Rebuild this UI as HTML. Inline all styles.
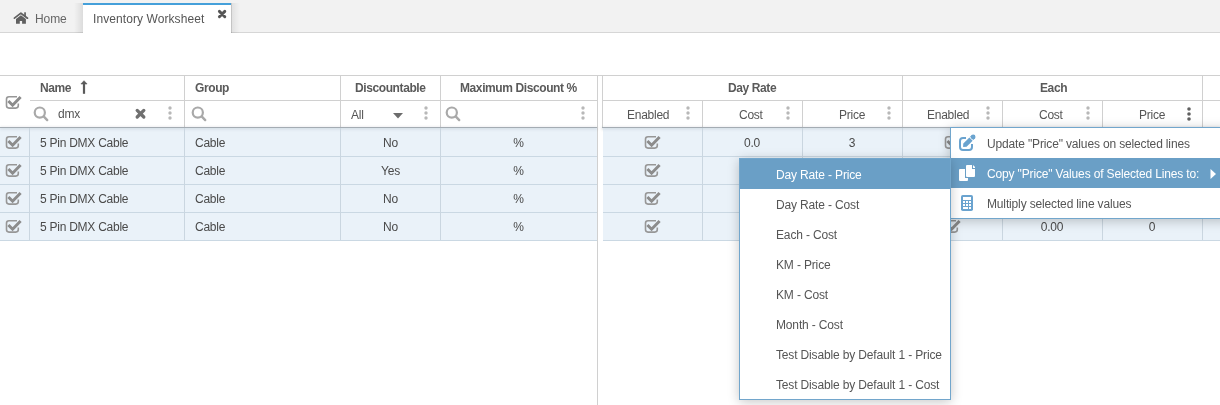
<!DOCTYPE html>
<html><head><meta charset="utf-8"><style>
*{box-sizing:border-box}
html,body{margin:0;padding:0}
body{width:1220px;height:405px;overflow:hidden;background:#fff;position:relative;font-family:"Liberation Sans",sans-serif;color:#4a4a4a;font-size:12px}
.a{position:absolute}
.t{position:absolute;white-space:nowrap;line-height:12px;letter-spacing:-0.25px}
.hl{position:absolute;height:1px;background:#d0d0d0}
.vl{position:absolute;width:1px;background:#d0d0d0}
.b{font-weight:bold;color:#5a5a5a;letter-spacing:-0.4px}
.h{color:#555}
.dots{position:absolute;width:4px;height:14px}
.dots i{position:absolute;left:0.3px;width:3.4px;height:3.4px;border-radius:50%;background:#b8b8b8}
.dots i:nth-child(1){top:0}.dots i:nth-child(2){top:4.7px}.dots i:nth-child(3){top:9.4px}
.dk i{background:#555}
.row{position:absolute;height:28px;background:#eaf2f9}
.rl{position:absolute;height:1px;background:#cad8e3}
.rv{position:absolute;width:1px;background:#cad6e0}
.menu{position:absolute;background:#fff;border:1px solid #72a6cc;box-shadow:0 2px 11px rgba(0,0,0,.22)}
.mi{position:absolute;left:0;right:0;height:30px}
.sel{background:#6a9fc6;color:#fff}
.mt{position:absolute;white-space:nowrap;line-height:12px;letter-spacing:-0.15px;color:#555}
.sel .mt{color:#fff}
</style></head><body>
<div id="root" style="position:absolute;left:0;top:0;width:1220px;height:405px;will-change:transform">
<div class="a" style="left:0;top:0;width:1220px;height:32px;background:#f2f2f2"></div>
<div class="a" style="left:0;top:32px;width:1220px;height:1px;background:#d6d6d6"></div>
<div class="a" style="left:74px;top:3px;width:9px;height:30px;background:linear-gradient(to right,rgba(0,0,0,0),rgba(0,0,0,.09))"></div>
<div class="a" style="left:231px;top:3px;width:9px;height:30px;background:linear-gradient(to left,rgba(0,0,0,0),rgba(0,0,0,.08))"></div>
<div class="a" style="left:231px;top:3px;width:1px;height:30px;background:rgba(0,0,0,.12)"></div>
<div class="a" style="left:83px;top:3px;width:148px;height:30px;background:#fff"></div>
<div class="a" style="left:83px;top:3px;width:148px;height:2px;background:#45a0da"></div>
<svg class="a" style="left:10px;top:8px" width="24" height="22" viewBox="0 0 24 22"><path d="M4.4 10.2 L10.9 5.2 L17.5 10.2" fill="none" stroke="#606060" stroke-width="1.7" stroke-linecap="round" stroke-linejoin="round"/><path d="M6 10.9 L10.9 7.2 L15.9 10.9 V15.8 H12.1 V13 H9.8 V15.8 H6 Z" fill="#606060"/><rect x="14.2" y="4.3" width="1.7" height="4" fill="#606060"/></svg>
<div class="t" style="left:35px;top:13px;color:#666;letter-spacing:-0.1px">Home</div>
<div class="t" style="left:93px;top:13px;color:#555;letter-spacing:0.08px">Inventory Worksheet</div>
<svg class="a" style="left:217px;top:9px" width="11" height="11" viewBox="0 0 11 11"><path d="M2.4 2.4 L7.8 7.8 M7.8 2.4 L2.4 7.8" stroke="#555" stroke-width="2.9" stroke-linecap="round"/></svg>
<div class="hl" style="left:0;top:75px;width:1220px"></div>
<div class="hl" style="left:30px;top:100px;width:567px"></div>
<div class="hl" style="left:602px;top:100px;width:618px"></div>
<div class="vl" style="left:184px;top:76px;height:51px"></div>
<div class="vl" style="left:340px;top:76px;height:51px"></div>
<div class="vl" style="left:440px;top:76px;height:51px"></div>
<div class="vl" style="left:597px;top:76px;height:329px"></div>
<div class="vl" style="left:602px;top:76px;height:52px"></div>
<div class="vl" style="left:702px;top:101px;height:26px"></div>
<div class="vl" style="left:802px;top:101px;height:26px"></div>
<div class="vl" style="left:902px;top:76px;height:51px"></div>
<div class="vl" style="left:1002px;top:101px;height:26px"></div>
<div class="vl" style="left:1102px;top:101px;height:26px"></div>
<div class="vl" style="left:1202px;top:76px;height:51px"></div>
<svg class="a" style="left:5px;top:95px" width="18" height="16" viewBox="0 0 18 16"><path d="M12 1.7 H4 Q1.5 1.7 1.5 4.2 V10.6 Q1.5 13.1 4 13.1 H10.8 Q13.3 13.1 13.3 10.6 V8.6" fill="none" stroke="#979797" stroke-width="1.6"/><path d="M3.4 6.0 L7.6 10.2 L15.6 2.0" fill="none" stroke="#8c8c8c" stroke-width="3"/></svg>
<div class="t b" style="left:40px;top:82px">Name</div>
<svg class="a" style="left:80px;top:80px" width="8" height="15" viewBox="0 0 8 15"><path d="M0.9 4 L4 0.7 L7.1 4 Z" fill="#5a5a5a" stroke="#5a5a5a" stroke-width="0.6" stroke-linejoin="round"/><rect x="2.9" y="3.5" width="2.2" height="10.3" fill="#5a5a5a"/></svg>
<div class="t b" style="left:195px;top:82px">Group</div>
<div class="t b" style="left:355px;top:82px">Discountable</div>
<div class="t b" style="left:460px;top:82px">Maximum Discount %</div>
<div class="t b" style="left:728px;top:82px">Day Rate</div>
<div class="t b" style="left:1040px;top:82px">Each</div>
<svg class="a" style="left:33px;top:106px" width="16" height="16" viewBox="0 0 16 16"><circle cx="6.8" cy="6.6" r="5.1" fill="none" stroke="#a9a9a9" stroke-width="2.2"/><path d="M10.9 10.7 L14.2 14.1" stroke="#a9a9a9" stroke-width="2.4" stroke-linecap="round"/></svg>
<div class="t h" style="left:58px;top:108px">dmx</div>
<svg class="a" style="left:134px;top:107px" width="13" height="13" viewBox="0 0 13 13"><path d="M3.2 3.4 L9.8 10 M9.8 3.4 L3.2 10" stroke="#707070" stroke-width="3.3" stroke-linecap="round"/></svg>
<svg class="a" style="left:168px;top:106px" width="4" height="16" viewBox="0 0 4 16"><circle cx="2" cy="2" r="1.7" fill="#b8b8b8"/><circle cx="2" cy="7" r="1.7" fill="#b8b8b8"/><circle cx="2" cy="12" r="1.7" fill="#b8b8b8"/></svg>
<svg class="a" style="left:191px;top:106px" width="16" height="16" viewBox="0 0 16 16"><circle cx="6.8" cy="6.6" r="5.1" fill="none" stroke="#a9a9a9" stroke-width="2.2"/><path d="M10.9 10.7 L14.2 14.1" stroke="#a9a9a9" stroke-width="2.4" stroke-linecap="round"/></svg>
<div class="t h" style="left:351px;top:109px">All</div>
<svg class="a" style="left:393px;top:113px" width="10" height="6" viewBox="0 0 10 6"><path d="M0 0 H10 L5 5.5 Z" fill="#6c6c6c"/></svg>
<svg class="a" style="left:424px;top:106px" width="4" height="16" viewBox="0 0 4 16"><circle cx="2" cy="2" r="1.7" fill="#b8b8b8"/><circle cx="2" cy="7" r="1.7" fill="#b8b8b8"/><circle cx="2" cy="12" r="1.7" fill="#b8b8b8"/></svg>
<svg class="a" style="left:445px;top:106px" width="16" height="16" viewBox="0 0 16 16"><circle cx="6.8" cy="6.6" r="5.1" fill="none" stroke="#a9a9a9" stroke-width="2.2"/><path d="M10.9 10.7 L14.2 14.1" stroke="#a9a9a9" stroke-width="2.4" stroke-linecap="round"/></svg>
<svg class="a" style="left:581px;top:106px" width="4" height="16" viewBox="0 0 4 16"><circle cx="2" cy="2" r="1.7" fill="#b8b8b8"/><circle cx="2" cy="7" r="1.7" fill="#b8b8b8"/><circle cx="2" cy="12" r="1.7" fill="#b8b8b8"/></svg>
<div class="t h" style="left:627px;top:109px">Enabled</div>
<svg class="a" style="left:686px;top:106px" width="4" height="16" viewBox="0 0 4 16"><circle cx="2" cy="2" r="1.7" fill="#b8b8b8"/><circle cx="2" cy="7" r="1.7" fill="#b8b8b8"/><circle cx="2" cy="12" r="1.7" fill="#b8b8b8"/></svg>
<div class="t h" style="left:739px;top:109px">Cost</div>
<svg class="a" style="left:786px;top:106px" width="4" height="16" viewBox="0 0 4 16"><circle cx="2" cy="2" r="1.7" fill="#b8b8b8"/><circle cx="2" cy="7" r="1.7" fill="#b8b8b8"/><circle cx="2" cy="12" r="1.7" fill="#b8b8b8"/></svg>
<div class="t h" style="left:839px;top:109px">Price</div>
<svg class="a" style="left:887px;top:106px" width="4" height="16" viewBox="0 0 4 16"><circle cx="2" cy="2" r="1.7" fill="#b8b8b8"/><circle cx="2" cy="7" r="1.7" fill="#b8b8b8"/><circle cx="2" cy="12" r="1.7" fill="#b8b8b8"/></svg>
<div class="t h" style="left:927px;top:109px">Enabled</div>
<svg class="a" style="left:986px;top:106px" width="4" height="16" viewBox="0 0 4 16"><circle cx="2" cy="2" r="1.7" fill="#b8b8b8"/><circle cx="2" cy="7" r="1.7" fill="#b8b8b8"/><circle cx="2" cy="12" r="1.7" fill="#b8b8b8"/></svg>
<div class="t h" style="left:1039px;top:109px">Cost</div>
<svg class="a" style="left:1086px;top:106px" width="4" height="16" viewBox="0 0 4 16"><circle cx="2" cy="2" r="1.7" fill="#b8b8b8"/><circle cx="2" cy="7" r="1.7" fill="#b8b8b8"/><circle cx="2" cy="12" r="1.7" fill="#b8b8b8"/></svg>
<div class="t h" style="left:1139px;top:109px">Price</div>
<svg class="a" style="left:1187px;top:106.8px" width="4" height="16" viewBox="0 0 4 16"><circle cx="2" cy="2" r="1.8" fill="#606060"/><circle cx="2" cy="7" r="1.8" fill="#606060"/><circle cx="2" cy="12" r="1.8" fill="#606060"/></svg>
<div class="a" style="left:0;top:127px;width:597px;height:1px;background:#a4acb3;box-shadow:0 1px 3px rgba(40,60,80,.25)"></div>
<div class="a" style="left:602px;top:127px;width:618px;height:1px;background:#a4acb3;box-shadow:0 1px 3px rgba(40,60,80,.25)"></div>
<div class="row" style="left:0;top:128px;width:597px;height:112px"></div>
<div class="row" style="left:603px;top:128px;width:617px;height:112px"></div>
<div class="rl" style="left:0;top:156px;width:597px"></div>
<div class="rl" style="left:603px;top:156px;width:617px"></div>
<div class="rl" style="left:0;top:184px;width:597px"></div>
<div class="rl" style="left:603px;top:184px;width:617px"></div>
<div class="rl" style="left:0;top:212px;width:597px"></div>
<div class="rl" style="left:603px;top:212px;width:617px"></div>
<div class="rl" style="left:0;top:240px;width:597px"></div>
<div class="rl" style="left:603px;top:240px;width:617px"></div>
<div class="a" style="left:0;top:127px;width:597px;height:1px;background:#a4acb3;box-shadow:0 1px 3px rgba(40,60,80,.25)"></div>
<div class="a" style="left:602px;top:127px;width:618px;height:1px;background:#a4acb3;box-shadow:0 1px 3px rgba(40,60,80,.25)"></div>
<div class="rv" style="left:29px;top:128px;height:112px"></div>
<div class="rv" style="left:184px;top:128px;height:112px"></div>
<div class="rv" style="left:340px;top:128px;height:112px"></div>
<div class="rv" style="left:440px;top:128px;height:112px"></div>
<div class="rv" style="left:702px;top:128px;height:112px"></div>
<div class="rv" style="left:802px;top:128px;height:112px"></div>
<div class="rv" style="left:902px;top:128px;height:112px"></div>
<div class="rv" style="left:1002px;top:128px;height:112px"></div>
<div class="rv" style="left:1102px;top:128px;height:112px"></div>
<div class="rv" style="left:1202px;top:128px;height:112px"></div>
<svg class="a" style="left:5px;top:135px" width="18" height="16" viewBox="0 0 18 16"><path d="M12 1.7 H4 Q1.5 1.7 1.5 4.2 V10.6 Q1.5 13.1 4 13.1 H10.8 Q13.3 13.1 13.3 10.6 V8.6" fill="none" stroke="#979797" stroke-width="1.6"/><path d="M3.4 6.0 L7.6 10.2 L15.6 2.0" fill="none" stroke="#8c8c8c" stroke-width="3"/></svg>
<div class="t" style="left:40px;top:137px">5 Pin DMX Cable</div>
<div class="t" style="left:195px;top:137px">Cable</div>
<div class="t" style="left:340px;width:101px;text-align:center;top:137px">No</div>
<div class="t" style="left:440px;width:157px;text-align:center;top:137px">%</div>
<svg class="a" style="left:644px;top:135px" width="18" height="16" viewBox="0 0 18 16"><path d="M12 1.7 H4 Q1.5 1.7 1.5 4.2 V10.6 Q1.5 13.1 4 13.1 H10.8 Q13.3 13.1 13.3 10.6 V8.6" fill="none" stroke="#979797" stroke-width="1.6"/><path d="M3.4 6.0 L7.6 10.2 L15.6 2.0" fill="none" stroke="#8c8c8c" stroke-width="3"/></svg>
<svg class="a" style="left:944px;top:135px" width="18" height="16" viewBox="0 0 18 16"><path d="M12 1.7 H4 Q1.5 1.7 1.5 4.2 V10.6 Q1.5 13.1 4 13.1 H10.8 Q13.3 13.1 13.3 10.6 V8.6" fill="none" stroke="#979797" stroke-width="1.6"/><path d="M3.4 6.0 L7.6 10.2 L15.6 2.0" fill="none" stroke="#8c8c8c" stroke-width="3"/></svg>
<div class="t" style="left:702px;width:100px;text-align:center;top:137px">0.0</div>
<div class="t" style="left:802px;width:100px;text-align:center;top:137px">3</div>
<div class="t" style="left:1002px;width:100px;text-align:center;top:137px">0.00</div>
<div class="t" style="left:1102px;width:100px;text-align:center;top:137px">0</div>
<svg class="a" style="left:5px;top:163px" width="18" height="16" viewBox="0 0 18 16"><path d="M12 1.7 H4 Q1.5 1.7 1.5 4.2 V10.6 Q1.5 13.1 4 13.1 H10.8 Q13.3 13.1 13.3 10.6 V8.6" fill="none" stroke="#979797" stroke-width="1.6"/><path d="M3.4 6.0 L7.6 10.2 L15.6 2.0" fill="none" stroke="#8c8c8c" stroke-width="3"/></svg>
<div class="t" style="left:40px;top:165px">5 Pin DMX Cable</div>
<div class="t" style="left:195px;top:165px">Cable</div>
<div class="t" style="left:340px;width:101px;text-align:center;top:165px">Yes</div>
<div class="t" style="left:440px;width:157px;text-align:center;top:165px">%</div>
<svg class="a" style="left:644px;top:163px" width="18" height="16" viewBox="0 0 18 16"><path d="M12 1.7 H4 Q1.5 1.7 1.5 4.2 V10.6 Q1.5 13.1 4 13.1 H10.8 Q13.3 13.1 13.3 10.6 V8.6" fill="none" stroke="#979797" stroke-width="1.6"/><path d="M3.4 6.0 L7.6 10.2 L15.6 2.0" fill="none" stroke="#8c8c8c" stroke-width="3"/></svg>
<svg class="a" style="left:944px;top:163px" width="18" height="16" viewBox="0 0 18 16"><path d="M12 1.7 H4 Q1.5 1.7 1.5 4.2 V10.6 Q1.5 13.1 4 13.1 H10.8 Q13.3 13.1 13.3 10.6 V8.6" fill="none" stroke="#979797" stroke-width="1.6"/><path d="M3.4 6.0 L7.6 10.2 L15.6 2.0" fill="none" stroke="#8c8c8c" stroke-width="3"/></svg>
<div class="t" style="left:702px;width:100px;text-align:center;top:165px">0.0</div>
<div class="t" style="left:802px;width:100px;text-align:center;top:165px">3</div>
<div class="t" style="left:1002px;width:100px;text-align:center;top:165px">0.00</div>
<div class="t" style="left:1102px;width:100px;text-align:center;top:165px">0</div>
<svg class="a" style="left:5px;top:191px" width="18" height="16" viewBox="0 0 18 16"><path d="M12 1.7 H4 Q1.5 1.7 1.5 4.2 V10.6 Q1.5 13.1 4 13.1 H10.8 Q13.3 13.1 13.3 10.6 V8.6" fill="none" stroke="#979797" stroke-width="1.6"/><path d="M3.4 6.0 L7.6 10.2 L15.6 2.0" fill="none" stroke="#8c8c8c" stroke-width="3"/></svg>
<div class="t" style="left:40px;top:193px">5 Pin DMX Cable</div>
<div class="t" style="left:195px;top:193px">Cable</div>
<div class="t" style="left:340px;width:101px;text-align:center;top:193px">No</div>
<div class="t" style="left:440px;width:157px;text-align:center;top:193px">%</div>
<svg class="a" style="left:644px;top:191px" width="18" height="16" viewBox="0 0 18 16"><path d="M12 1.7 H4 Q1.5 1.7 1.5 4.2 V10.6 Q1.5 13.1 4 13.1 H10.8 Q13.3 13.1 13.3 10.6 V8.6" fill="none" stroke="#979797" stroke-width="1.6"/><path d="M3.4 6.0 L7.6 10.2 L15.6 2.0" fill="none" stroke="#8c8c8c" stroke-width="3"/></svg>
<svg class="a" style="left:944px;top:191px" width="18" height="16" viewBox="0 0 18 16"><path d="M12 1.7 H4 Q1.5 1.7 1.5 4.2 V10.6 Q1.5 13.1 4 13.1 H10.8 Q13.3 13.1 13.3 10.6 V8.6" fill="none" stroke="#979797" stroke-width="1.6"/><path d="M3.4 6.0 L7.6 10.2 L15.6 2.0" fill="none" stroke="#8c8c8c" stroke-width="3"/></svg>
<div class="t" style="left:702px;width:100px;text-align:center;top:193px">0.0</div>
<div class="t" style="left:802px;width:100px;text-align:center;top:193px">3</div>
<div class="t" style="left:1002px;width:100px;text-align:center;top:193px">0.00</div>
<div class="t" style="left:1102px;width:100px;text-align:center;top:193px">0</div>
<svg class="a" style="left:5px;top:219px" width="18" height="16" viewBox="0 0 18 16"><path d="M12 1.7 H4 Q1.5 1.7 1.5 4.2 V10.6 Q1.5 13.1 4 13.1 H10.8 Q13.3 13.1 13.3 10.6 V8.6" fill="none" stroke="#979797" stroke-width="1.6"/><path d="M3.4 6.0 L7.6 10.2 L15.6 2.0" fill="none" stroke="#8c8c8c" stroke-width="3"/></svg>
<div class="t" style="left:40px;top:221px">5 Pin DMX Cable</div>
<div class="t" style="left:195px;top:221px">Cable</div>
<div class="t" style="left:340px;width:101px;text-align:center;top:221px">No</div>
<div class="t" style="left:440px;width:157px;text-align:center;top:221px">%</div>
<svg class="a" style="left:644px;top:219px" width="18" height="16" viewBox="0 0 18 16"><path d="M12 1.7 H4 Q1.5 1.7 1.5 4.2 V10.6 Q1.5 13.1 4 13.1 H10.8 Q13.3 13.1 13.3 10.6 V8.6" fill="none" stroke="#979797" stroke-width="1.6"/><path d="M3.4 6.0 L7.6 10.2 L15.6 2.0" fill="none" stroke="#8c8c8c" stroke-width="3"/></svg>
<svg class="a" style="left:944px;top:219px" width="18" height="16" viewBox="0 0 18 16"><path d="M12 1.7 H4 Q1.5 1.7 1.5 4.2 V10.6 Q1.5 13.1 4 13.1 H10.8 Q13.3 13.1 13.3 10.6 V8.6" fill="none" stroke="#979797" stroke-width="1.6"/><path d="M3.4 6.0 L7.6 10.2 L15.6 2.0" fill="none" stroke="#8c8c8c" stroke-width="3"/></svg>
<div class="t" style="left:702px;width:100px;text-align:center;top:221px">0.0</div>
<div class="t" style="left:802px;width:100px;text-align:center;top:221px">3</div>
<div class="t" style="left:1002px;width:100px;text-align:center;top:221px">0.00</div>
<div class="t" style="left:1102px;width:100px;text-align:center;top:221px">0</div>
<div class="menu" style="left:950px;top:127px;width:280px;height:92px">
<div class="mi" style="top:0"><svg class="a" style="left:8px;top:7px;overflow:visible" width="18" height="17" viewBox="0 0 18 17"><path d="M7 3 H4 Q1 3 1 6 V12 Q1 15 4 15 H10 Q13 15 13 12 V9" fill="none" stroke="#6aa3cf" stroke-width="2"/><path d="M4.1 12.0 L4.31 8.53 L10.39 2.45 L13.65 5.71 L7.57 11.79 Z" fill="#6aa3cf"/><path d="M11.03 1.81 L12.58 0.26 L15.84 3.52 L14.29 5.07 Z" fill="#6aa3cf"/><circle cx="14.21" cy="1.89" r="2.3" fill="#6aa3cf"/></svg><div class="mt" style="left:36px;top:10px">Update "Price" values on selected lines</div></div>
<div class="mi sel" style="top:30px"><svg class="a" style="left:8px;top:7px" width="18" height="17" viewBox="0 0 18 17"><rect x="0" y="4" width="9" height="12" rx="1" fill="#fff"/><path d="M6 -1 H13 L17 3 V13 H6 Z" fill="#6a9fc6"/><path d="M8 0 H13 V4 H16 V11 Q16 12 15 12 H8 Q7 12 7 11 V1 Q7 0 8 0 Z" fill="#fff"/><path d="M14 0 L16 2 V3 H14 Z" fill="#fff"/></svg><div class="mt" style="left:36px;top:10px">Copy "Price" Values of Selected Lines to:</div><svg class="a" style="left:259px;top:11px" width="7" height="10" viewBox="0 0 7 10"><path d="M0.5 0 L6 5 L0.5 10 Z" fill="#fff"/></svg></div>
<div class="mi" style="top:60px"><svg class="a" style="left:10px;top:7px" width="12" height="16" viewBox="0 0 12 16"><rect x="0" y="0" width="12" height="16" rx="1.8" fill="#6aa3cf"/><g fill="#fff"><rect x="2" y="2" width="8" height="3"/><rect x="2" y="6" width="2" height="2"/><rect x="5" y="6" width="2" height="2"/><rect x="8" y="6" width="2" height="2"/><rect x="2" y="9" width="2" height="2"/><rect x="5" y="9" width="2" height="2"/><rect x="8" y="9" width="2" height="2"/><rect x="2" y="12" width="5" height="2"/><rect x="8" y="12" width="2" height="2"/></g></svg><div class="mt" style="left:36px;top:10px">Multiply selected line values</div></div>
</div>
<div class="menu" style="left:739px;top:158px;width:212px;height:242px">
<div class="mi sel" style="top:0px"><div class="mt" style="left:36px;top:10px">Day Rate - Price</div></div>
<div class="mi" style="top:30px"><div class="mt" style="left:36px;top:10px">Day Rate - Cost</div></div>
<div class="mi" style="top:60px"><div class="mt" style="left:36px;top:10px">Each - Cost</div></div>
<div class="mi" style="top:90px"><div class="mt" style="left:36px;top:10px">KM - Price</div></div>
<div class="mi" style="top:120px"><div class="mt" style="left:36px;top:10px">KM - Cost</div></div>
<div class="mi" style="top:150px"><div class="mt" style="left:36px;top:10px">Month - Cost</div></div>
<div class="mi" style="top:180px"><div class="mt" style="left:36px;top:10px">Test Disable by Default 1 - Price</div></div>
<div class="mi" style="top:210px"><div class="mt" style="left:36px;top:10px">Test Disable by Default 1 - Cost</div></div>
</div>
</div>
</body></html>
